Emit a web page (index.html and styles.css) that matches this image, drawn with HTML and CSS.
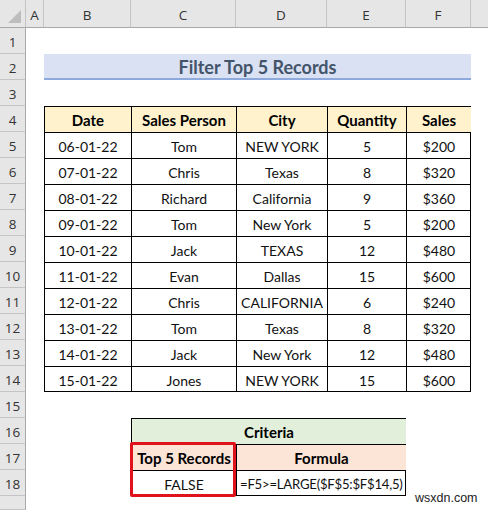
FILE: index.html
```html
<!DOCTYPE html>
<html>
<head>
<meta charset="utf-8">
<link rel="stylesheet" href="styles.css">
</head>
<body>
<div class="sheet">
  <div class="corner"><span class="tri"></span></div>
  <div class="ch">A</div>
  <div class="ch">B</div>
  <div class="ch">C</div>
  <div class="ch">D</div>
  <div class="ch">E</div>
  <div class="ch">F</div>
  <div class="ch last"></div>

  <div class="rh">1</div>
  <div class="rh">2</div>
  <div class="rh">3</div>
  <div class="rh">4</div>
  <div class="rh">5</div>
  <div class="rh">6</div>
  <div class="rh">7</div>
  <div class="rh">8</div>
  <div class="rh">9</div>
  <div class="rh">10</div>
  <div class="rh">11</div>
  <div class="rh">12</div>
  <div class="rh">13</div>
  <div class="rh">14</div>
  <div class="rh">15</div>
  <div class="rh">16</div>
  <div class="rh">17</div>
  <div class="rh">18</div>
  <div class="rh"></div>

  <div class="title">Filter Top 5 Records</div>

  <div class="data">
    <div class="c hd">Date</div><div class="c hd">Sales Person</div><div class="c hd">City</div><div class="c hd">Quantity</div><div class="c hd">Sales</div>
    <div class="c">06-01-22</div><div class="c">Tom</div><div class="c">NEW YORK</div><div class="c">5</div><div class="c">$200</div>
    <div class="c">07-01-22</div><div class="c">Chris</div><div class="c">Texas</div><div class="c">8</div><div class="c">$320</div>
    <div class="c">08-01-22</div><div class="c">Richard</div><div class="c">California</div><div class="c">9</div><div class="c">$360</div>
    <div class="c">09-01-22</div><div class="c">Tom</div><div class="c">New York</div><div class="c">5</div><div class="c">$200</div>
    <div class="c">10-01-22</div><div class="c">Jack</div><div class="c">TEXAS</div><div class="c">12</div><div class="c">$480</div>
    <div class="c">11-01-22</div><div class="c">Evan</div><div class="c">Dallas</div><div class="c">15</div><div class="c">$600</div>
    <div class="c">12-01-22</div><div class="c">Chris</div><div class="c">CALIFORNIA</div><div class="c">6</div><div class="c">$240</div>
    <div class="c">13-01-22</div><div class="c">Tom</div><div class="c">Texas</div><div class="c">8</div><div class="c">$320</div>
    <div class="c">14-01-22</div><div class="c">Jack</div><div class="c">New York</div><div class="c">12</div><div class="c">$480</div>
    <div class="c">15-01-22</div><div class="c">Jones</div><div class="c">NEW YORK</div><div class="c">15</div><div class="c">$600</div>
  </div>

  <div class="crit">
    <div class="c hd green span">Criteria</div>
    <div class="c hd peach">Top 5 Records</div><div class="c hd peach">Formula</div>
    <div class="c">FALSE</div><div class="c left formula">=F5&gt;=LARGE($F$5:$F$14,5)</div>
  </div>

  <div class="hl"></div>
  <div class="wm">wsxdn.com</div>
</div>
</body>
</html>
```
FILE: styles.css
```css
* { box-sizing: border-box; }
html, body { margin: 0; padding: 0; background: #fff; }
body { width: 488px; height: 510px; overflow: hidden; font-family: Lato, "Open Sans", sans-serif; }

.sheet {
  position: relative;
  display: grid;
  grid-template-columns: 26px 18px 87px 105px 91px 79px 65px 17px;
  grid-template-rows: 28px repeat(18, 26px) 14px;
  width: 488px;
  height: 510px;
}

.corner {
  grid-row: 1; grid-column: 1;
  background: #e6e6e6;
  border-right: 1px solid #c4c4c4;
  border-bottom: 1px solid #a8a8a8;
  position: relative;
}
.tri {
  position: absolute; right: 4px; bottom: 4px;
  width: 0; height: 0;
  border-left: 13px solid transparent;
  border-bottom: 13px solid #bdbdbd;
}
.ch {
  grid-row: 1;
  background: #e6e6e6;
  border-right: 1px solid #c4c4c4;
  border-bottom: 1px solid #a8a8a8;
  display: flex; align-items: center; justify-content: center;
  padding-top: 2px;
  font-family: "Open Sans", sans-serif;
  font-size: 13.5px;
  color: #333;
}
.ch.last { border-right: none; }
.rh {
  grid-column: 1;
  background: #e6e6e6;
  border-right: 1px solid #a8a8a8;
  border-bottom: 1px solid #c4c4c4;
  display: flex; align-items: center; justify-content: center;
  padding-top: 2px;
  font-family: "Open Sans", sans-serif;
  font-size: 13.5px;
  color: #333;
}

.title {
  grid-row: 3; grid-column: 3 / 8;
  background: #d9e1f2;
  border-bottom: 2px solid #8ea9db;
  display: flex; align-items: center; justify-content: center;
  font-weight: 700;
  font-size: 18px;
  color: #44546a;
  padding-top: 1px;
}

.data {
  grid-row: 5 / 16; grid-column: 3 / 8;
  display: grid;
  grid-template-columns: 87px 105px 91px 79px 65px;
  grid-auto-rows: 26px;
  border-right: 1px solid #000;
  border-bottom: 1px solid #000;
}
.c {
  border-left: 1px solid #000;
  border-top: 1px solid #000;
  display: flex; align-items: center; justify-content: center;
  font-size: 14px;
  color: #111;
  padding-top: 1px;
  white-space: nowrap;
}
.hd { font-weight: 700; color: #000; font-size: 15px; }
.data .hd { background: #fff2cc; }

.crit {
  grid-row: 17 / 20; grid-column: 4 / 7;
  display: grid;
  grid-template-columns: 105px 170px;
  grid-auto-rows: 26px;
  border-right: 1px solid #000;
  border-bottom: 1px solid #000;
}
.crit .span { grid-column: 1 / 3; }
.green { background: #e2efda; }
.peach { background: #fce4d6; }
.left { justify-content: flex-start; padding-left: 3px; }
.formula { font-size: 13.2px; letter-spacing: -0.25px; }

.hl {
  grid-row: 18 / 20; grid-column: 4;
  margin: -2px 0 -1px -1px;
  border: 3px solid #e0121c;
  border-radius: 2px;
}

.wm {
  position: absolute;
  left: 415px; top: 491px;
  font-family: "Liberation Sans", Arial, sans-serif;
  font-size: 12.5px;
  color: #222;
}
```
